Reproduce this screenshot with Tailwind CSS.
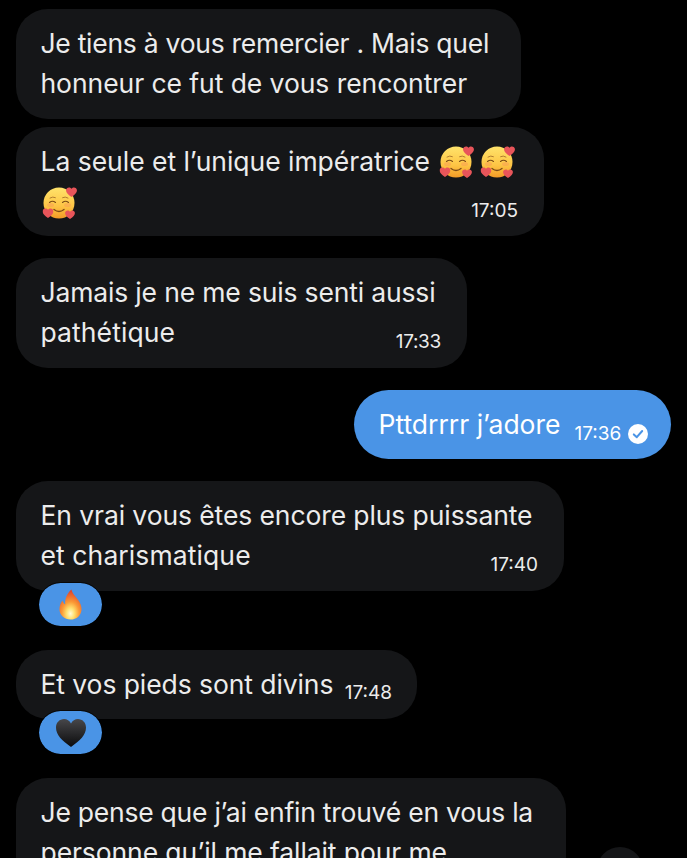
<!DOCTYPE html>
<html>
  <head>
    <meta charset="UTF-8" />
    <meta name="viewport" content="width=device-width, initial-scale=1.0" />
    <script src="https://cdn.jsdelivr.net/npm/@tailwindcss/browser@4"></script>
  </head>
  <body class="bg-black">
    <!-- shared emoji drawings -->
    <svg class="absolute w-0 h-0">
      <defs>
        <linearGradient id="face" x1="0" y1="0" x2="0" y2="1">
          <stop offset="0%" stop-color="#ffe36b" />
          <stop offset="60%" stop-color="#fdc545" />
          <stop offset="100%" stop-color="#f29a26" />
        </linearGradient>
        <radialGradient id="flame" cx="50%" cy="80%" r="75%">
          <stop offset="0%" stop-color="#fffbd6" />
          <stop offset="24%" stop-color="#ffe070" />
          <stop offset="52%" stop-color="#fb9a35" />
          <stop offset="100%" stop-color="#e0452c" />
        </radialGradient>
        <linearGradient id="blackheart" x1="0" y1="0" x2="0" y2="1">
          <stop offset="0%" stop-color="#47474a" />
          <stop offset="100%" stop-color="#0b0b0c" />
        </linearGradient>
        <symbol id="heart" viewBox="0 0 12 11">
          <path d="M6 11C2 8.300 0 6.200 0 3.700 0 .5 4.200-.7 6 2c1.800-2.700 6-1.500 6 1.700 0 2.500-2 4.600-6 7.300z" fill="#e8555a" />
        </symbol>
        <symbol id="smiling" viewBox="0 0 36 36">
          <circle cx="17" cy="18" r="15.500" fill="url(#face)" />
          <ellipse cx="8.500" cy="20" rx="3.500" ry="2" fill="#f7925a" opacity="0.4" />
          <ellipse cx="25.500" cy="20" rx="3.500" ry="2" fill="#f7925a" opacity="0.4" />
          <path d="M8 13q2.800-1.800 5.400-.4M20.600 12.600q2.600-1.400 5.400.4" fill="none" stroke="#a8742a" stroke-width="0.9" stroke-linecap="round" />
          <path d="M7.500 17.500q3-2.400 6 0M20.500 17.500q3-2.400 6 0" fill="none" stroke="#7a4a16" stroke-width="1.100" stroke-linecap="round" />
          <path d="M12 24.500q5 4 10 0" fill="none" stroke="#7a4a16" stroke-width="1.300" stroke-linecap="round" />
          <use href="#heart" x="24" y="2" width="11" height="10" />
          <use href="#heart" x="0.500" y="23" width="11" height="10" />
          <use href="#heart" x="23" y="25" width="10" height="9" />
        </symbol>
      </defs>
    </svg>

    <main class="relative h-[858px] overflow-hidden flex flex-col items-start pl-[16px] pr-[16px] pt-[9px] font-['Inter',sans-serif] text-[26.5px] leading-[40px] text-[#ececec]">
      <div class="shrink-0 w-[505px] h-[110px] rounded-[32px] bg-[#151618] pl-[24.5px] pt-[14px] whitespace-nowrap">
        <p class="tracking-[-0.27px]">Je tiens à vous remercier . Mais quel</p>
        <p class="tracking-[-0.06px]">honneur ce fut de vous rencontrer</p>
      </div>

      <div class="relative shrink-0 mt-[8px] w-[528px] h-[109px] rounded-[32px] bg-[#151618] pl-[24.5px] pt-[15px] whitespace-nowrap">
        <div class="flex items-center h-[40px]">
          <span class="-mt-[2px] tracking-[-0.03px]">La seule et l’unique impératrice</span>
          <svg class="ml-[9px] w-[36px] h-[36px]"><use href="#smiling" /></svg>
          <svg class="ml-[5px] w-[36px] h-[36px]"><use href="#smiling" /></svg>
        </div>
        <div class="flex items-center h-[42px]">
          <svg class="ml-[1px] w-[36px] h-[36px]"><use href="#smiling" /></svg>
        </div>
        <span class="absolute right-[26px] bottom-[13px] text-[19px] leading-[24px]">17:05</span>
      </div>

      <div class="relative shrink-0 mt-[22px] w-[451px] h-[110px] rounded-[32px] bg-[#151618] pl-[24.5px] pt-[14px] whitespace-nowrap">
        <p class="tracking-[-0.16px]">Jamais je ne me suis senti aussi</p>
        <p class="tracking-[0.1px]">pathétique</p>
        <span class="absolute right-[26px] bottom-[14px] text-[19px] leading-[24px] tracking-[-0.3px]">17:33</span>
      </div>

      <div class="shrink-0 mt-[22px] self-end w-[317px] h-[69px] rounded-full bg-[#4a94e6] pl-[24.5px] flex items-center whitespace-nowrap text-white">
        <span class="-mt-[2px]">Pttdrrrr j’adore</span>
        <span class="ml-[14px] mt-[18px] text-[19px] leading-[24px]">17:36</span>
        <svg class="ml-[7px] mt-[19px] w-[20px] h-[20px]" viewBox="0 0 20 20">
          <circle cx="10" cy="10" r="10" fill="#fff" />
          <path d="M5.800 10.400l3 2.800 5.400-6.200" fill="none" stroke="#4a94e6" stroke-width="2" stroke-linecap="round" stroke-linejoin="round" />
        </svg>
      </div>

      <div class="relative shrink-0 mt-[22px] w-[548px] h-[110px] rounded-[32px] bg-[#151618] pl-[24.5px] pt-[14px] whitespace-nowrap">
        <p class="tracking-[-0.1px]">En vrai vous êtes encore plus puissante</p>
        <p class="tracking-[0.1px]">et charismatique</p>
        <span class="absolute right-[26px] bottom-[14px] text-[19px] leading-[24px]">17:40</span>
      </div>
      <div class="relative z-10 shrink-0 -mt-[8px] ml-[23px] w-[63px] h-[43px] rounded-full bg-[#4a94e6] outline outline-black/60 flex items-center justify-center">
        <svg class="w-[23px] h-[31px]" viewBox="0 0 26 34">
          <path d="M14 0c1.500 5 4 7 7 11 3 4 4.500 7.500 4.500 11C25.500 29 20 34 13 34S.5 29 .5 22.500c0-4 1.500-7.500 3.500-10 .5 2 1.500 3.500 3 4.500C6.500 10.500 9 4.500 14 0z" fill="url(#flame)" />
        </svg>
      </div>

      <div class="relative shrink-0 mt-[24px] w-[401px] h-[69px] rounded-[32px] bg-[#151618] pl-[24.5px] pt-[14px] whitespace-nowrap">
        <p class="tracking-[-0.08px]">Et vos pieds sont divins</p>
        <span class="absolute right-[25px] bottom-[14px] text-[19px] leading-[24px]">17:48</span>
      </div>
      <div class="relative z-10 shrink-0 -mt-[8px] ml-[23px] w-[63px] h-[43px] rounded-full bg-[#4a94e6] outline outline-black/60 flex items-center justify-center">
        <svg class="w-[30px] h-[28px]" viewBox="0 0 30 28">
          <path d="M15 28C6 21.500 0 16 0 8.500 0 3.500 3.700 0 8 0c3 0 5.500 1.500 7 4.500C16.500 1.500 19 0 22 0c4.300 0 8 3.500 8 8.500C30 16 24 21.500 15 28z" fill="url(#blackheart)" />
        </svg>
      </div>

      <div class="shrink-0 mt-[24px] w-[550px] h-[110px] rounded-[32px] bg-[#151618] pl-[24.5px] pt-[14px] whitespace-nowrap">
        <p class="tracking-[-0.24px]">Je pense que j’ai enfin trouvé en vous la</p>
        <p class="tracking-[-0.1px]">personne qu’il me fallait pour me</p>
      </div>

      <!-- reaction button cut off by the bottom edge -->
      <div class="absolute left-[597px] top-[847px] w-[46px] h-[46px] rounded-full bg-[#151618]"></div>
    </main>
  </body>
</html>
